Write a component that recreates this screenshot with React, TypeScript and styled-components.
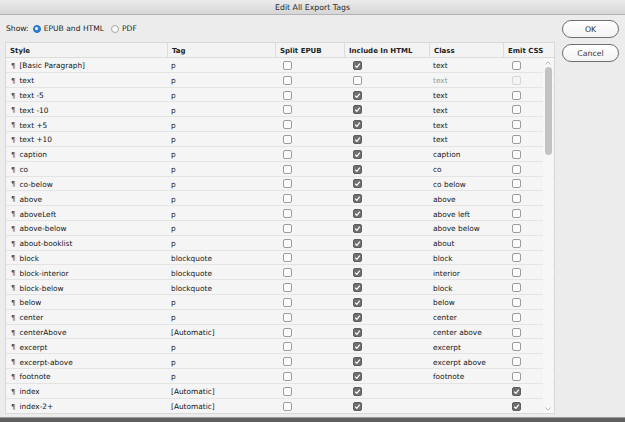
import React from "react";
import styled, { createGlobalStyle } from "styled-components";

const Global = createGlobalStyle`
  html, body { margin: 0; padding: 0; background: #ececec; }
  body { font-family: "DejaVu Sans", "Liberation Sans", sans-serif; }
  * { box-sizing: border-box; }
`;

type RowData = {
  style: string;
  tag: string;
  split: boolean;
  include: boolean;
  cls: string;
  emit: boolean;
  dim?: boolean;
};

const rows: RowData[] = [
  { style: "[Basic Paragraph]", tag: "p", split: false, include: true, cls: "text", emit: false },
  { style: "text", tag: "p", split: false, include: false, cls: "text", emit: false, dim: true },
  { style: "text -5", tag: "p", split: false, include: true, cls: "text", emit: false },
  { style: "text -10", tag: "p", split: false, include: true, cls: "text", emit: false },
  { style: "text +5", tag: "p", split: false, include: true, cls: "text", emit: false },
  { style: "text +10", tag: "p", split: false, include: true, cls: "text", emit: false },
  { style: "caption", tag: "p", split: false, include: true, cls: "caption", emit: false },
  { style: "co", tag: "p", split: false, include: true, cls: "co", emit: false },
  { style: "co-below", tag: "p", split: false, include: true, cls: "co below", emit: false },
  { style: "above", tag: "p", split: false, include: true, cls: "above", emit: false },
  { style: "aboveLeft", tag: "p", split: false, include: true, cls: "above left", emit: false },
  { style: "above-below", tag: "p", split: false, include: true, cls: "above below", emit: false },
  { style: "about-booklist", tag: "p", split: false, include: true, cls: "about", emit: false },
  { style: "block", tag: "blockquote", split: false, include: true, cls: "block", emit: false },
  { style: "block-interior", tag: "blockquote", split: false, include: true, cls: "interior", emit: false },
  { style: "block-below", tag: "blockquote", split: false, include: true, cls: "block", emit: false },
  { style: "below", tag: "p", split: false, include: true, cls: "below", emit: false },
  { style: "center", tag: "p", split: false, include: true, cls: "center", emit: false },
  { style: "centerAbove", tag: "[Automatic]", split: false, include: true, cls: "center above", emit: false },
  { style: "excerpt", tag: "p", split: false, include: true, cls: "excerpt", emit: false },
  { style: "excerpt-above", tag: "p", split: false, include: true, cls: "excerpt above", emit: false },
  { style: "footnote", tag: "p", split: false, include: true, cls: "footnote", emit: false },
  { style: "index", tag: "[Automatic]", split: false, include: true, cls: "", emit: true },
  { style: "index-2+", tag: "[Automatic]", split: false, include: true, cls: "", emit: true },
];

const COLS = "161px 108px 69px 85px 74px 1fr";

const Window = styled.div`
  width: 625px;
  height: 422px;
  display: flex;
  flex-direction: column;
  background: #ececec;
  overflow: hidden;
`;

const TitleBar = styled.div`
  height: 15px;
  flex: none;
  display: flex;
  align-items: center;
  justify-content: center;
  background: linear-gradient(#ebebeb, #d6d6d6);
  border-bottom: 1px solid #b4b4b4;
  font-size: 7.8px;
  color: #2a2a2a;
`;

const Body = styled.div`
  flex: 1;
  display: flex;
  min-height: 0;
`;

const Main = styled.div`
  width: 555px;
  padding-left: 5px;
  display: flex;
  flex-direction: column;
`;

const ShowBar = styled.div`
  height: 27px;
  display: flex;
  align-items: center;
  gap: 4px;
  padding-left: 1px;
  font-size: 7.6px;
  color: #1e1e1e;
`;

const RadioOption = styled.label`
  display: flex;
  align-items: center;
  gap: 3px;
  margin-right: 3px;
`;

const Radio = styled.span<{ $on?: boolean }>`
  width: 8px;
  height: 8px;
  border-radius: 50%;
  display: inline-flex;
  align-items: center;
  justify-content: center;
  background: ${(p) => (p.$on ? "#2f7fd8" : "#fbfbfb")};
  border: 1px solid ${(p) => (p.$on ? "#2a6fc0" : "#a8a8a8")};
  &::after {
    content: "";
    width: 3px;
    height: 3px;
    border-radius: 50%;
    background: ${(p) => (p.$on ? "#fff" : "transparent")};
  }
`;

const Table = styled.div`
  position: relative;
  height: 372px;
  background: #f5f5f5;
  border: 1px solid #d9d9d9;
  display: flex;
  flex-direction: column;
  overflow: hidden;
`;

const HeaderRow = styled.div`
  display: grid;
  grid-template-columns: ${COLS};
  height: 15px;
  flex: none;
  border-bottom: 1px solid #dcdcdc;
  background: #f3f3f3;
`;

const HeaderCell = styled.div`
  display: flex;
  align-items: center;
  padding: 2px 0 0 4px;
  font-size: 7px;
  font-weight: bold;
  color: #1e1e1e;
  border-left: 1px solid #dcdcdc;
  &:first-child {
    border-left: none;
  }
`;

const Row = styled.div`
  display: grid;
  grid-template-columns: ${COLS};
  height: 14.82px;
  flex: none;
  border-bottom: 1px solid #e4e4e4;
  font-size: 7.4px;
  color: #151515;
`;

const Cell = styled.div<{ $dim?: boolean; $pad?: number }>`
  display: flex;
  align-items: center;
  padding-left: ${(p) => p.$pad ?? 4}px;
  padding-top: 2px;
  white-space: nowrap;
  color: ${(p) => (p.$dim ? "#9a9a9a" : "inherit")};
`;

const BoxCell = styled.div<{ $pad: number }>`
  display: flex;
  align-items: center;
  padding-left: ${(p) => p.$pad}px;
  padding-top: 1px;
`;

const Pilcrow = styled.span`
  color: #444;
  margin-right: 4px;
  font-size: 7px;
`;

const Box = styled.span<{ $checked?: boolean; $disabled?: boolean }>`
  width: 9px;
  height: 9px;
  border-radius: 2px;
  display: inline-flex;
  align-items: center;
  justify-content: center;
  background: ${(p) => (p.$checked ? "#6f6f6f" : p.$disabled ? "#f4f4f4" : "#fdfdfd")};
  border: 1px solid
    ${(p) => (p.$checked ? "#5e5e5e" : p.$disabled ? "#d6d6d6" : "#9c9c9c")};
`;

const ScrollTrack = styled.div`
  position: absolute;
  right: 1px;
  top: 16px;
  bottom: 0;
  width: 10px;
  display: flex;
  flex-direction: column;
  align-items: center;
  background: #f7f7f7;
`;

const ScrollArrow = styled.div`
  height: 8px;
  display: flex;
  align-items: center;
  justify-content: center;
`;

const ScrollThumb = styled.div`
  width: 7px;
  height: 88px;
  border-radius: 4px;
  background: #c3c3c3;
`;

const ScrollSpacer = styled.div`
  flex: 1;
`;

const Side = styled.div`
  flex: 1;
  display: flex;
  flex-direction: column;
  gap: 6px;
  padding: 5px 0 0 7px;
`;

const Button = styled.button`
  width: 57px;
  height: 18px;
  border-radius: 9px;
  border: 1px solid #6f6f6f;
  background: linear-gradient(#ffffff, #f3f3f3);
  font-family: "DejaVu Sans", "Liberation Sans", sans-serif;
  font-size: 7.8px;
  color: #333;
  padding: 0;
  display: flex;
  align-items: center;
  justify-content: center;
`;

const BottomEdge = styled.div`
  height: 5px;
  flex: none;
  background: #616161;
  border-top: 1px solid #9a9a9a;
`;

const Check = () => (
  <svg width="7" height="7" viewBox="0 0 7 7">
    <path d="M1.2 3.8 L2.9 5.3 L5.8 1.6" fill="none" stroke="#fff" strokeWidth="1.2" />
  </svg>
);

const CheckBox: React.FC<{ checked?: boolean; disabled?: boolean }> = ({ checked, disabled }) => (
  <Box $checked={checked} $disabled={disabled}>{checked ? <Check /> : null}</Box>
);

const Arrow: React.FC<{ up?: boolean }> = ({ up }) => (
  <svg width="6" height="4" viewBox="0 0 6 4">
    <path d={up ? "M0.5 3.5 L3 1 L5.5 3.5" : "M0.5 0.5 L3 3 L5.5 0.5"} fill="none" stroke="#a8a8a8" strokeWidth="0.8" />
  </svg>
);

export default function App() {
  return (
    <Window>
      <Global />
      <TitleBar>Edit All Export Tags</TitleBar>
      <Body>
        <Main>
          <ShowBar>
            <span>Show:</span>
            <RadioOption>
              <Radio $on />
              <span>EPUB and HTML</span>
            </RadioOption>
            <RadioOption>
              <Radio />
              <span>PDF</span>
            </RadioOption>
          </ShowBar>
          <Table>
            <HeaderRow>
              <HeaderCell>Style</HeaderCell>
              <HeaderCell>Tag</HeaderCell>
              <HeaderCell>Split EPUB</HeaderCell>
              <HeaderCell>Include In HTML</HeaderCell>
              <HeaderCell>Class</HeaderCell>
              <HeaderCell>Emit CSS</HeaderCell>
            </HeaderRow>
            {rows.map((r, i) => (
              <Row key={i}>
                <Cell $pad={5}>
                  <Pilcrow>¶</Pilcrow>
                  {r.style}
                </Cell>
                <Cell>{r.tag}</Cell>
                <BoxCell $pad={8}>
                  <CheckBox checked={r.split} />
                </BoxCell>
                <BoxCell $pad={9}>
                  <CheckBox checked={r.include} />
                </BoxCell>
                <Cell $dim={r.dim}>{r.cls}</Cell>
                <BoxCell $pad={9}>
                  <CheckBox checked={r.emit} disabled={r.dim} />
                </BoxCell>
              </Row>
            ))}
            <ScrollTrack>
              <ScrollArrow>
                <Arrow up />
              </ScrollArrow>
              <ScrollThumb />
              <ScrollSpacer />
              <ScrollArrow>
                <Arrow />
              </ScrollArrow>
            </ScrollTrack>
          </Table>
        </Main>
        <Side>
          <Button>OK</Button>
          <Button>Cancel</Button>
        </Side>
      </Body>
      <BottomEdge />
    </Window>
  );
}
